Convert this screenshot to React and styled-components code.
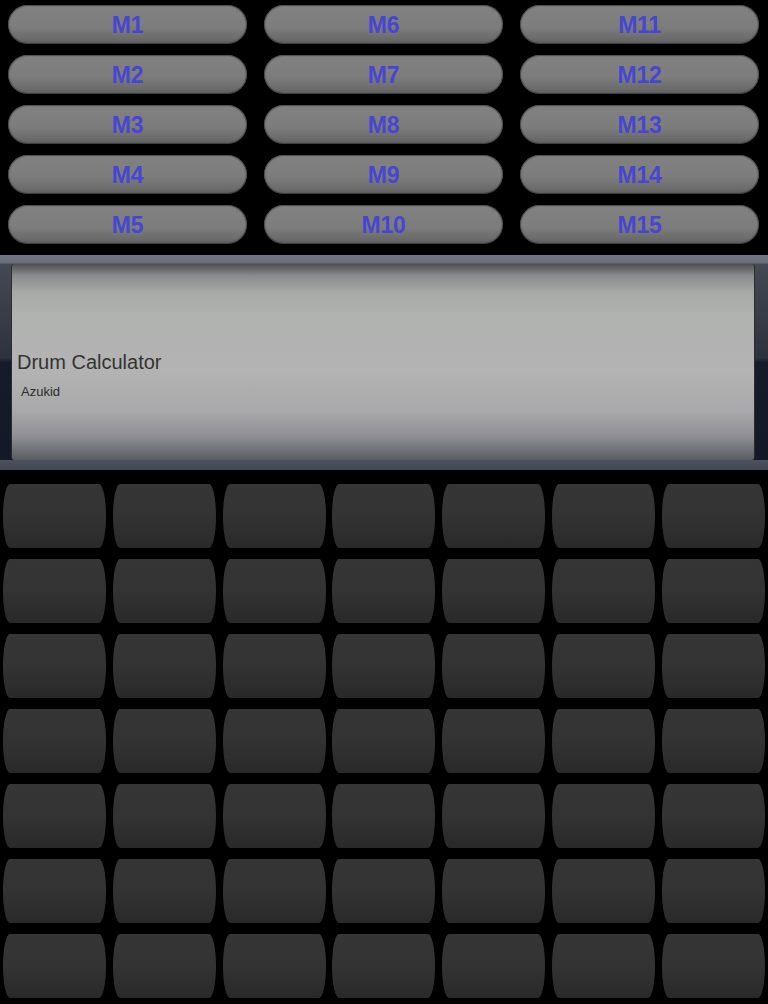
import React from 'react';
import styled, { createGlobalStyle } from 'styled-components';

const GlobalStyle = createGlobalStyle`
  html, body {
    margin: 0;
    padding: 0;
    background: #000;
  }
  body {
    font-family: "Liberation Sans", Arial, sans-serif;
    width: 768px;
    height: 1004px;
    overflow: hidden;
  }
`;

const memoryColumns = [
  ['M1', 'M2', 'M3', 'M4', 'M5'],
  ['M6', 'M7', 'M8', 'M9', 'M10'],
  ['M11', 'M12', 'M13', 'M14', 'M15'],
];

export default function App() {
  // grid fills row by row, so flatten column lists into rows
  const memories = [];
  for (let r = 0; r < 5; r++) {
    memoryColumns.forEach((col) => memories.push(col[r]));
  }
  const pads = Array.from({ length: 49 }, (_, i) => i);

  return (
    <Screen>
      <GlobalStyle />
      <MemoryGrid>
        {memories.map((m) => (
          <MemoryButton key={m}>{m}</MemoryButton>
        ))}
      </MemoryGrid>
      <DisplayFrame>
        <Display>
          <Title>Drum Calculator</Title>
          <Author>Azukid</Author>
        </Display>
      </DisplayFrame>
      <PadGrid>
        {pads.map((p) => (
          <Pad key={p} />
        ))}
      </PadGrid>
    </Screen>
  );
}

const Screen = styled.div`
  display: flex;
  flex-direction: column;
  width: 768px;
  height: 1004px;
  background: #000;
`;

const MemoryGrid = styled.div`
  display: grid;
  grid-template-columns: repeat(3, 239px);
  grid-auto-rows: 39px;
  column-gap: 17px;
  row-gap: 11px;
  padding: 5px 0 0 8px;
  margin-bottom: 11px;
`;

const MemoryButton = styled.div`
  display: flex;
  align-items: center;
  justify-content: center;
  padding-top: 1px;
  border-radius: 20px;
  background: linear-gradient(to bottom, #818181 0%, #7d7d7d 55%, #6c6c6c 85%, #5e5e5e 100%);
  box-shadow: inset 0 0 1px 1px rgba(40, 40, 40, 0.6);
  color: #4646d2;
  font-weight: bold;
  font-size: 23px;
  letter-spacing: -0.3px;
`;

const DisplayFrame = styled.div`
  height: 215px;
  box-sizing: border-box;
  padding: 9px 13px 10px 11px;
  background:
    linear-gradient(to bottom, #737784 0, #6a6e7a 8px, transparent 9px, transparent 205px, #4d515d 205px, #444854 100%),
    linear-gradient(to bottom, #474b56 0%, #2e323d 48%, #161b2a 50%, #141927 100%);
`;

const Display = styled.div`
  height: 100%;
  box-sizing: border-box;
  padding: 87px 0 0 5px;
  border-left: 1px solid #2a2c30;
  border-right: 1px solid #2a2c30;
  border-radius: 3px;
  background: linear-gradient(
    to bottom,
    #4f4f52 0%,
    #8a8b8c 6%,
    #a6a8a6 14%,
    #b0b2b0 25%,
    #b3b3b3 55%,
    #a9a9ab 75%,
    #8e8e94 88%,
    #6c6c74 96%,
    #5a5a62 100%
  );
`;

const Title = styled.div`
  color: #333;
  font-size: 20px;
  line-height: 22px;
`;

const Author = styled.div`
  margin: 11px 0 0 4px;
  color: #2c2c2c;
  font-size: 13px;
  line-height: 16px;
`;

const PadGrid = styled.div`
  display: grid;
  grid-template-columns: repeat(7, 103px);
  grid-auto-rows: 64px;
  column-gap: 6.8px;
  row-gap: 11px;
  padding: 14px 0 0 3px;
`;

const Pad = styled.div`
  border-radius: 7px / 32px;
  background: linear-gradient(to bottom, #353535 0%, #333333 50%, #292929 100%);
`;
